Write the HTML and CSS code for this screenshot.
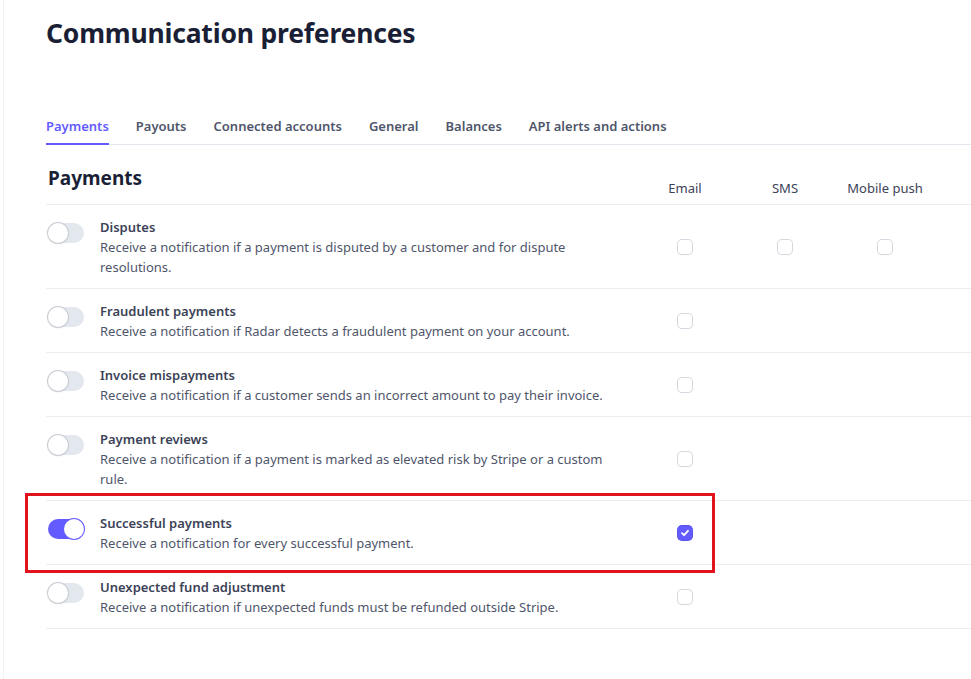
FILE: index.html
```html
<!DOCTYPE html>
<html>
<head>
    <title>Communication preferences</title>
    <link rel="stylesheet" href="styles.css">
</head>
<body>
    <div class="page">
        <h1 class="title">Communication preferences</h1>

        <nav class="tabs">
            <a class="tab active">Payments</a>
            <a class="tab">Payouts</a>
            <a class="tab">Connected accounts</a>
            <a class="tab">General</a>
            <a class="tab">Balances</a>
            <a class="tab">API alerts and actions</a>
        </nav>

        <div class="prefs">
            <div class="head">
                <h2 class="section">Payments</h2>
                <span class="col-label">Email</span>
                <span class="col-label">SMS</span>
                <span class="col-label">Mobile push</span>
            </div>

            <div class="row">
                <span class="toggle"></span>
                <div class="info">
                    <div class="name">Disputes</div>
                    <div class="desc">Receive a notification if a payment is disputed by a customer and for dispute resolutions.</div>
                </div>
                <span class="cell"><span class="check"></span></span>
                <span class="cell"><span class="check"></span></span>
                <span class="cell"><span class="check"></span></span>
            </div>

            <div class="row">
                <span class="toggle"></span>
                <div class="info">
                    <div class="name">Fraudulent payments</div>
                    <div class="desc">Receive a notification if Radar detects a fraudulent payment on your account.</div>
                </div>
                <span class="cell"><span class="check"></span></span>
            </div>

            <div class="row">
                <span class="toggle"></span>
                <div class="info">
                    <div class="name">Invoice mispayments</div>
                    <div class="desc">Receive a notification if a customer sends an incorrect amount to pay their invoice.</div>
                </div>
                <span class="cell"><span class="check"></span></span>
            </div>

            <div class="row">
                <span class="toggle"></span>
                <div class="info">
                    <div class="name">Payment reviews</div>
                    <div class="desc">Receive a notification if a payment is marked as elevated risk by Stripe or a custom rule.</div>
                </div>
                <span class="cell"><span class="check"></span></span>
            </div>

            <div class="row highlighted">
                <span class="toggle on"></span>
                <div class="info">
                    <div class="name">Successful payments</div>
                    <div class="desc">Receive a notification for every successful payment.</div>
                </div>
                <span class="cell">
                    <span class="check checked">
                        <svg width="10" height="10" viewBox="0 0 10 10"><path d="M2 5.2 L4.1 7.2 L8 2.8" fill="none" stroke="#fff" stroke-width="1.8" stroke-linecap="round" stroke-linejoin="round"/></svg>
                    </span>
                </span>
                <span class="red-box"></span>
            </div>

            <div class="row">
                <span class="toggle"></span>
                <div class="info">
                    <div class="name">Unexpected fund adjustment</div>
                    <div class="desc">Receive a notification if unexpected funds must be refunded outside Stripe.</div>
                </div>
                <span class="cell"><span class="check"></span></span>
            </div>
        </div>
    </div>
</body>
</html>
```

FILE: styles.css
```css
body { margin: 0; font-family: "Noto Sans", "Open Sans", sans-serif; color: #3c4257; background: #fff; }
.page { min-height: 679px; margin-left: 3px; border-left: 1px solid #f3f3f3; padding-left: 42px; box-sizing: border-box; }

.title { margin: 0; padding-top: 15px; font-size: 26.5px; line-height: 36px; font-weight: 700; color: #1a1f36; letter-spacing: -0.2px; }

.tabs { display: flex; gap: 27px; margin-top: 65px; border-bottom: 1px solid #e3e8ee; }
.tab { font-size: 13px; line-height: 20px; font-weight: 600; color: #4f566b; padding-bottom: 7px; margin-bottom: -1px; border-bottom: 2px solid transparent; }
.tab.active { color: #635bff; border-bottom-color: #635bff; }

.prefs { display: flex; flex-direction: column; }
.head, .row { display: grid; grid-template-columns: 54px 535px 100px 100px 100px; border-bottom: 1px solid #ebeef1; }
.head { height: 59px; align-items: end; }
.section { grid-column: 1 / 3; margin: 0 0 14px 2px; font-size: 19px; line-height: 24px; font-weight: 700; color: #1a1f36; }
.col-label { text-align: center; font-size: 13px; line-height: 20px; color: #3c4257; padding-bottom: 6px; }

.row { position: relative; padding: 12px 0 11px; }
.toggle { position: relative; width: 36px; height: 20px; margin: 6px 0 0 2px; border-radius: 10px; background: #e3e8ee; box-sizing: border-box; }
.toggle::after { content: ""; position: absolute; left: 0; top: 0; width: 20px; height: 20px; border-radius: 50%; background: #fff; box-shadow: 0 0 0 1px #c8ccd3, 0 1px 2px rgba(0,0,0,0.12); box-sizing: border-box; }
.toggle.on { background: #635bff; }
.toggle.on::after { left: 16px; box-shadow: 0 0 0 1px #635bff; }

.info { padding-right: 15px; font-size: 13px; line-height: 20px; }
.name { font-weight: 600; color: #3c4257; }
.desc { color: #4f566b; }

.cell { display: flex; align-items: center; justify-content: center; }
.check { display: flex; align-items: center; justify-content: center; width: 14px; height: 14px; border-radius: 4px; background: #fff; box-shadow: 0 0 0 1px #d5d9df, 0 1px 1px rgba(0,0,0,0.1); }
.check.checked { background: #635bff; box-shadow: 0 0 0 1px #5851ea; }

.red-box { position: absolute; left: -21px; top: -8px; width: 690px; height: 80px; border: 3px solid #e0141e; box-sizing: border-box; pointer-events: none; }
```
